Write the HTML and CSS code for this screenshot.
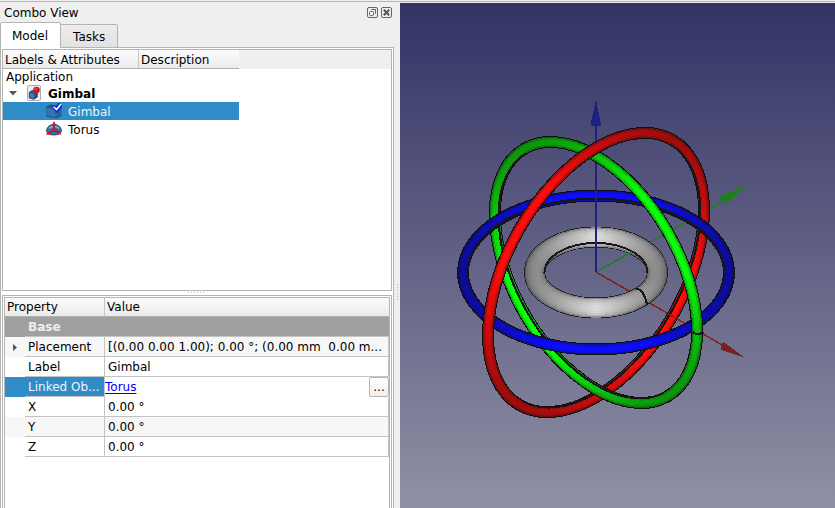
FILE: index.html
```html
<!DOCTYPE html>
<html lang="en">
<head>
<meta charset="utf-8">
<title>Gimbal</title>
<link rel="stylesheet" href="styles.css">
</head>
<body>
<div class="app">
  <aside class="dock">
    <header class="dock-title">
      <span>Combo View</span>
      <button class="dock-btn" type="button" aria-label="Float">
        <svg width="11" height="11" viewBox="0 0 11 11"><rect x=".5" y=".5" width="10" height="10" rx="1.5" class="frame"/><rect x="2.5" y="4.5" width="4" height="4" rx="1" class="frame"/><path d="M4.500 3V2.500H8.500V6.500H8" class="frame"/></svg>
      </button>
      <button class="dock-btn" type="button" aria-label="Close">
        <svg width="11" height="11" viewBox="0 0 11 11"><rect x=".5" y=".5" width="10" height="10" rx="1.500" class="frame"/><path d="M2.800 2.800L8.200 8.200M8.200 2.800L2.800 8.200" class="cross"/></svg>
      </button>
    </header>
    <div class="tabs">
      <button class="tab tab-active" type="button">Model</button>
      <button class="tab" type="button">Tasks</button>
      <span class="tab-line"></span>
    </div>
    <div class="pane">
      <section class="tree">
        <div class="tree-head"><span class="col-label">Labels &amp; Attributes</span><span class="col-desc">Description</span></div>
        <ul class="tree-list">
          <li class="node node-app">Application</li>
          <li class="node node-doc">
            <svg class="caret" width="8" height="5" viewBox="0 0 8 5"><path d="M0 0H8L4 4.500z" fill="#555"/></svg>
            <svg width="16" height="16" viewBox="0 0 16 16"><rect x="1.500" y=".5" width="13" height="15" rx="1" fill="#eee" stroke="#aaa"/><path d="M3.300 7.500l3-2 5 1v5.500l-3.500 2.200-4.500-1.300z" fill="#29558f" stroke="#102a4d" stroke-width=".8"/><path d="M3.800 8l4 1v4.500l-4-.9z" fill="#457ab5"/><circle cx="10.500" cy="5" r="3.300" fill="#d51420"/><circle cx="9.800" cy="4" r="1.200" fill="#f0434b"/></svg>
            <strong>Gimbal</strong>
          </li>
          <li class="node node-item node-selected">
            <svg width="16" height="16" viewBox="0 0 16 16"><path d="M0 4l5-2 10 2v9l-5 2-10-2z" fill="#1e5799" stroke="#153e6e" stroke-width=".7"/><path d="M.4 4.500l9.200 1.500v8.500L.4 12.600z" fill="#3874b5"/><path d="M9.800 6L15 4.200V12.700l-5.200 2z" fill="#285f9f"/><path d="M8.500 4l2.300 2.300L14.800 1" fill="none" stroke="#0a20f0" stroke-width="5"/><path d="M8 4l2.500 2.500L15 1" fill="none" stroke="#fff" stroke-width="1.700"/></svg>
            <span>Gimbal</span>
          </li>
          <li class="node node-item">
            <svg width="16" height="16" viewBox="0 0 16 16"><path d="M.5 9Q2 3.500 8 3.500T15.500 9Q15.500 14 8 14T.5 9z" fill="#3c6ea5" stroke="#173a63" stroke-width=".8"/><path d="M3 7.500Q4.500 5.500 8 5.500T13 7.500" fill="none" stroke="#81add6" stroke-width="1.500"/><path d="M8 3V9M8 9L2 13M8 9L14 12" stroke="#b20d15" stroke-width="1.500"/><g fill="#d61922"><path d="M8 0l2 4H6z"/><circle cx="8" cy="9" r="1.700"/><path d="M0 14l2-4 2 3.500zM15.500 13.500L12 13.200 13.500 10z"/></g></svg>
            <span>Torus</span>
          </li>
        </ul>
      </section>
      <div class="splitter"></div>
      <section class="props">
        <div class="props-inner">
          <table class="grid">
            <colgroup><col class="c-gutter"><col class="c-name"><col></colgroup>
            <thead><tr><th colspan="2">Property</th><th>Value</th></tr></thead>
            <tbody>
              <tr class="group"><td></td><td colspan="2">Base</td></tr>
              <tr class="alt"><td class="gutter"><svg width="4" height="7" viewBox="0 0 4 7"><path d="M0 0L4 3.500 0 7z" fill="#555"/></svg></td><td>Placement</td><td>[(0.00 0.00 1.00); 0.00 °; (0.00 mm&nbsp; 0.00 m...</td></tr>
              <tr><td></td><td>Label</td><td>Gimbal</td></tr>
              <tr class="current"><td></td><td>Linked Ob...</td><td class="editor"><div class="link-edit"><a href="#torus">Torus</a><button type="button">...</button></div></td></tr>
              <tr><td></td><td>X</td><td>0.00 °</td></tr>
              <tr class="alt"><td></td><td>Y</td><td>0.00 °</td></tr>
              <tr><td></td><td>Z</td><td>0.00 °</td></tr>
            </tbody>
          </table>
        </div>
      </section>
    </div>
  </aside>
  <div class="handle"></div>
  <main class="view">
    <svg class="scene" viewBox="400 3 435 505" preserveAspectRatio="xMidYMid slice">
      <defs>
        <linearGradient id="sky" x1="0" y1="0" x2="0" y2="1"><stop offset="0" stop-color="#333366"/><stop offset="1" stop-color="#9090a5"/></linearGradient>
        <linearGradient id="red" gradientUnits="userSpaceOnUse" x1="-155" y1="0" x2="155" y2="0"><stop offset="0" stop-color="#a00c0c"/><stop offset=".35" stop-color="#ff0c0c"/><stop offset=".65" stop-color="#ff0c0c"/><stop offset="1" stop-color="#a00c0c"/></linearGradient>
        <linearGradient id="green" gradientUnits="userSpaceOnUse" x1="-144" y1="0" x2="144" y2="0"><stop offset="0" stop-color="#0c960c"/><stop offset=".35" stop-color="#0cff0c"/><stop offset=".65" stop-color="#0cff0c"/><stop offset="1" stop-color="#0c960c"/></linearGradient>
        <linearGradient id="blue" gradientUnits="userSpaceOnUse" x1="-134" y1="0" x2="134" y2="0"><stop offset="0" stop-color="#0c0c98"/><stop offset=".35" stop-color="#0c0cff"/><stop offset=".65" stop-color="#0c0cff"/><stop offset="1" stop-color="#0c0c98"/></linearGradient>
        <linearGradient id="gray" gradientUnits="userSpaceOnUse" x1="-72" y1="0" x2="72" y2="0"><stop offset="0" stop-color="#808080"/><stop offset=".2" stop-color="#a0a0a0"/><stop offset=".5" stop-color="#dedede"/><stop offset=".8" stop-color="#a0a0a0"/><stop offset="1" stop-color="#808080"/></linearGradient>
        <path id="r-far" d="M-153 0A153 88 0 0 0 153 0"/>
        <path id="r-near" d="M-153 1V0A153 88 0 0 1 153 0V1"/>
        <path id="g-far" d="M-143 0A143 82.500 0 0 0 143 0"/>
        <path id="g-near" d="M-143 1V0A143 82.500 0 0 1 143 0V1"/>
        <path id="b-far" d="M-133 0A133 77 0 0 1 133 0"/>
        <path id="b-near" d="M-133 -1V0A133 77 0 0 0 133 0V-1"/>
      </defs>
      <rect x="400" y="3" width="435" height="505" fill="url(#sky)"/>

      <path d="M596 272L722 202" stroke="#207c20" stroke-width="1.500"/>
      <path d="M745 186L720 195.500V200L725.500 203L731 201z" fill="#207c20"/>

      <g class="tube" transform="translate(596 272.500) rotate(-60)" stroke="url(#red)">
        <use href="#r-far" class="edge"/><use href="#r-far" class="rim"/><use href="#r-far" class="mid"/><use href="#r-far" class="core"/>
        <path class="seam" d="M-148 0A148 85 0 0 0 148 0"/>
      </g>
      <g class="tube" transform="translate(596 272.500) rotate(60)" stroke="url(#green)">
        <use href="#g-far" class="edge"/><use href="#g-far" class="rim"/><use href="#g-far" class="mid"/><use href="#g-far" class="core"/>
        <path class="seam" d="M-138 0A138 79.500 0 0 0 138 0"/>
      </g>
      <g class="tube" transform="translate(596 272.500)" stroke="url(#blue)">
        <use href="#b-far" class="edge"/><use href="#b-far" class="rim"/><use href="#b-far" class="mid"/><use href="#b-far" class="core"/>
        <path class="seam" d="M-128 0A128 74 0 0 1 128 0"/>
      </g>

      <path d="M596 272L724 346" stroke="#801f22" stroke-width="1.500"/>
      <path d="M745 358L723.500 342L721 345V350L727 352z" fill="#801f22"/>

      <g transform="translate(596 272.500)" fill="none" stroke="url(#gray)">
        <ellipse rx="61.500" ry="35.500" stroke="#222" stroke-width="21"/>
        <ellipse rx="61.500" ry="35.500" stroke-width="19.500" opacity=".6"/>
        <ellipse rx="61.500" ry="35.500" stroke-width="17" opacity=".5"/>
        <ellipse rx="61.500" ry="35.500" stroke-width="14" opacity=".5"/>
        <ellipse rx="61.500" ry="35.500" stroke-width="10" opacity=".6"/>
        <ellipse rx="61.500" ry="35.500" stroke-width="6" opacity=".7"/>
        <path d="M-51.500 0A51.500 29.500 0 0 1 51.500 0" class="seam"/>
        <path d="M40 16Q48 17 51 32" class="seam"/>
      </g>
      <path d="M596 272L632 252" stroke="#207c20" stroke-width="1.500"/>
      <path d="M596 272L629 291" stroke="#801f22" stroke-width="1.500"/>

      <path d="M596 272V124" stroke="#20207f" stroke-width="2"/>
      <path d="M596 99L601 125L596 127L590.500 125z" fill="#20207f"/>

      <g class="tube" transform="translate(596 272.500)" stroke="url(#blue)">
        <use href="#b-near" class="edge"/><use href="#b-near" class="rim"/><use href="#b-near" class="mid"/><use href="#b-near" class="core"/>
      </g>
      <g class="tube" transform="translate(596 272.500) rotate(60)" stroke="url(#green)">
        <use href="#g-near" class="edge"/><use href="#g-near" class="rim"/><use href="#g-near" class="mid"/><use href="#g-near" class="core"/>
      </g>
      <path d="M692.500 332Q698 336 703.500 332" class="seam"/>
      <g class="tube" transform="translate(596 272.500) rotate(-60)" stroke="url(#red)">
        <use href="#r-near" class="edge"/><use href="#r-near" class="rim"/><use href="#r-near" class="mid"/><use href="#r-near" class="core"/>
      </g>
    </svg>
  </main>
</div>
</body>
</html>
```
FILE: styles.css
```css
* { box-sizing: border-box; }

body {
  margin: 0;
  background: #efefef;
  color: #000;
  font: 12px/18px "DejaVu Sans", sans-serif;
  overflow: hidden;
}

button { font: inherit; color: inherit; }

.app {
  display: flex;
  height: 100vh;
  padding-top: 3px;
  background: linear-gradient(#efefef 1px, #b4b4b4 1px, #b4b4b4 2px, #efefef 2px);
}

.dock {
  display: flex;
  flex-direction: column;
  flex: 0 0 394px;
}

.dock-title {
  display: flex;
  align-items: center;
  gap: 3px;
  height: 19px;
  padding: 0 2px 0 4px;
}
.dock-title span { flex: 1; }
.dock-btn {
  display: flex;
  padding: 0;
  border: 0;
  background: none;
}
.frame { fill: none; stroke: #666; }
.cross { stroke: #555; stroke-width: 2; }

.tabs {
  display: flex;
  align-items: flex-end;
  height: 26px;
}
.tab {
  height: 24px;
  padding: 1px 12px 0;
  border: 1px solid #b4b4b4;
  border-left: 0;
  border-radius: 0 2px 0 0;
  background: linear-gradient(#ececec, #e2e2e2);
}
.tab-active {
  height: 26px;
  padding: 0 12px 0 11px;
  border-left: 1px solid #b4b4b4;
  border-bottom: 0;
  border-radius: 2px 2px 0 0;
  background: #fff;
}
.tab-line {
  flex: 1;
  border-bottom: 1px solid #b4b4b4;
}

.pane {
  display: flex;
  flex-direction: column;
  flex: 1;
  min-height: 0;
  padding: 1px 1px 0;
  border: solid #b4b4b4;
  border-width: 0 1px;
  background: #fff;
}

.tree {
  flex: 0 0 242px;
  border: 1px solid #b4b4b4;
}
.tree-head {
  display: flex;
  height: 19px;
  background: #efefef;
}
.tree-head span {
  padding: 1px 0 0 2px;
  border-bottom: 1px solid #b0b0b0;
  background: linear-gradient(#fcfcfc, #ebebeb);
}
.col-label { width: 136px; border-right: 1px solid #c4c4c4; }
.col-desc { width: 100px; }

.tree-list {
  width: 236px;
  margin: 0;
  padding: 0;
  list-style: none;
}
.node {
  display: flex;
  align-items: center;
  gap: 6px;
  height: 18px;
  line-height: 20px;
}
.node-app { height: 15px; padding-left: 3px; line-height: 18px; }
.node-doc { padding-left: 6px; }
.node-doc .caret { margin-right: 3px; }
.node-item { padding-left: 43px; }
.node span, .node strong { padding-top: 2px; }
.node-selected { background: #308cc6; color: #eef6fb; }

.splitter {
  height: 4px;
  background: repeating-linear-gradient(90deg, #bbb 0 1px, transparent 1px 3px) center 1px / 18px 1px no-repeat;
}

.props {
  flex: 1;
  min-height: 0;
  padding: 1px 1px 0;
  border: solid #b4b4b4;
  border-width: 1px 1px 0;
}
.props-inner {
  height: 100%;
  border: solid #b4b4b4;
  border-width: 1px 1px 0;
}

.grid {
  width: 100%;
  table-layout: fixed;
  border-collapse: separate;
  border-spacing: 0;
}
.c-gutter { width: 20px; }
.c-name { width: 80px; }
.grid th {
  height: 19px;
  padding: 1px 2px 0;
  border-right: 1px solid #c4c4c4;
  border-bottom: 1px solid #b0b0b0;
  background: linear-gradient(#fcfcfc, #ebebeb);
  font-weight: 400;
  line-height: 17px;
  text-align: left;
}
.grid th:last-child { border-right: 0; }
.grid td {
  height: 20px;
  padding: 1px 3px 0;
  border-right: 1px solid #c4c4c4;
  border-bottom: 1px solid #c4c4c4;
  white-space: nowrap;
}
.grid td:first-child { border: 0; }
.grid .group td {
  border-right: 0;
  background: #a0a0a0;
  color: #efefef;
  font-weight: 700;
}
.grid .alt td { background: #f7f7f7; }
.grid .gutter { padding-left: 8px; }
.gutter svg { display: block; }
.current td { background: #308cc6; color: #eef6fb; }
.grid .current .editor {
  padding: 0;
  border: 0;
  background: #fff;
}
.link-edit {
  display: flex;
  align-items: center;
  justify-content: space-between;
  height: 20px;
}
.link-edit a { color: #0000ff; text-underline-offset: 2px; }
.link-edit button {
  width: 20px;
  height: 20px;
  padding: 0;
  border: 1px solid #b4b4b4;
  border-radius: 2px;
  background: linear-gradient(#fff, #efefef);
  color: #000;
}

.handle {
  flex: 0 0 6px;
  background: repeating-linear-gradient(#bbb 0 1px, transparent 1px 3px) 3px 281px / 1px 16px no-repeat;
}

.view { flex: 1; min-width: 0; }
.scene { display: block; width: 100%; height: 100%; shape-rendering: crispEdges; }
.tube { fill: none; }
.edge { stroke: #101010; stroke-width: 12px; }
.rim { stroke-width: 10px; opacity: .6; }
.mid { stroke-width: 8px; opacity: .6; }
.core { stroke-width: 5px; }
.seam { fill: none; stroke: #161616; stroke-width: 2px; }
```
